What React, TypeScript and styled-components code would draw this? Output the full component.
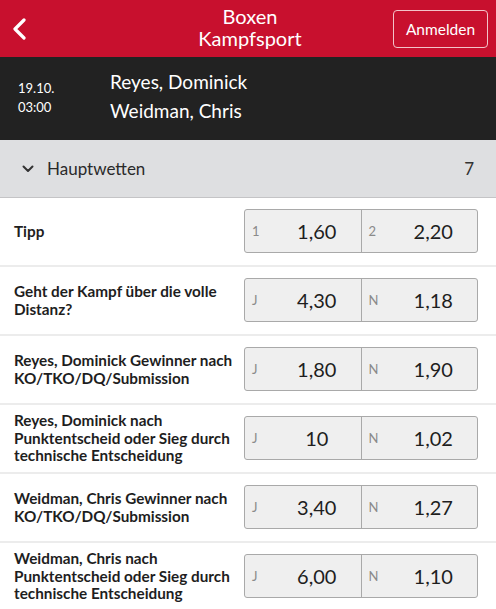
import React from 'react'
import styled, { createGlobalStyle } from 'styled-components'

const GlobalStyle = createGlobalStyle`
  html, body {
    margin: 0;
    padding: 0;
    background: #ffffff;
  }
  body {
    font-family: Lato, "Open Sans", sans-serif;
    color: #222222;
  }
`

type Market = {
  label: string
  left: [string, string]
  right: [string, string]
}

const markets: Market[] = [
  { label: 'Tipp', left: ['1', '1,60'], right: ['2', '2,20'] },
  { label: 'Geht der Kampf über die volle Distanz?', left: ['J', '4,30'], right: ['N', '1,18'] },
  { label: 'Reyes, Dominick Gewinner nach KO/TKO/DQ/Submission', left: ['J', '1,80'], right: ['N', '1,90'] },
  {
    label: 'Reyes, Dominick nach Punktentscheid oder Sieg durch technische Entscheidung',
    left: ['J', '10'],
    right: ['N', '1,02'],
  },
  { label: 'Weidman, Chris Gewinner nach KO/TKO/DQ/Submission', left: ['J', '3,40'], right: ['N', '1,27'] },
  {
    label: 'Weidman, Chris nach Punktentscheid oder Sieg durch technische Entscheidung',
    left: ['J', '6,00'],
    right: ['N', '1,10'],
  },
]

const App: React.FC = () => {
  return (
    <>
      <GlobalStyle />
      <Page>
        <TopBar>
          <BackButton aria-label="Zurück">
            <svg width="16" height="22" viewBox="0 0 16 22">
              <path d="M12 2 L3 11 L12 20" fill="none" stroke="#fff" strokeWidth="3.2" strokeLinecap="round" strokeLinejoin="round" />
            </svg>
          </BackButton>
          <Title>
            Boxen
            <br />
            Kampfsport
          </Title>
          <LoginButton>Anmelden</LoginButton>
        </TopBar>

        <EventBar>
          <EventTime>
            <span>19.10.</span>
            <span>03:00</span>
          </EventTime>
          <Teams>
            <span>Reyes, Dominick</span>
            <span>Weidman, Chris</span>
          </Teams>
        </EventBar>

        <GroupHeader>
          <GroupTitle>
            <svg width="12" height="8" viewBox="0 0 12 8">
              <path d="M1.5 1.5 L6 6 L10.5 1.5" fill="none" stroke="#333" strokeWidth="2" strokeLinecap="round" strokeLinejoin="round" />
            </svg>
            Hauptwetten
          </GroupTitle>
          <GroupCount>7</GroupCount>
        </GroupHeader>

        {markets.map((m) => (
          <MarketRow key={m.label}>
            <MarketLabel>{m.label}</MarketLabel>
            <OddsBox>
              <OddsCell>
                <OddsKey>{m.left[0]}</OddsKey>
                <OddsValue>{m.left[1]}</OddsValue>
              </OddsCell>
              <OddsCell divider>
                <OddsKey>{m.right[0]}</OddsKey>
                <OddsValue>{m.right[1]}</OddsValue>
              </OddsCell>
            </OddsBox>
          </MarketRow>
        ))}
      </Page>
    </>
  )
}

const Page = styled.div`
  width: 496px;
  height: 609px;
  overflow: hidden;
  background: #ffffff;
`

const TopBar = styled.header`
  height: 57px;
  background: #c8102e;
  display: grid;
  grid-template-columns: 1fr auto 1fr;
  align-items: center;
  padding: 0 8px 0 12px;
  box-sizing: border-box;
  color: #ffffff;
`

const BackButton = styled.div`
  justify-self: start;
  display: flex;
  align-items: center;
  height: 24px;
`

const Title = styled.h1`
  margin: 0 0 3px;
  font-size: 20px;
  font-weight: 400;
  line-height: 22px;
  text-align: center;
`

const LoginButton = styled.div`
  justify-self: end;
  box-sizing: border-box;
  width: 95px;
  height: 38px;
  display: flex;
  align-items: center;
  justify-content: center;
  border: 1.5px solid #f3c3c9;
  border-radius: 4px;
  font-size: 15.5px;
  color: #ffffff;
`

const EventBar = styled.section`
  height: 83px;
  background: #222222;
  color: #ffffff;
  display: flex;
  align-items: center;
  box-sizing: border-box;
  padding: 0 0 6px 18px;
`

const EventTime = styled.div`
  width: 92px;
  display: flex;
  flex-direction: column;
  gap: 3px;
  font-size: 13px;
  line-height: 16px;
  margin-top: 4px;
`

const Teams = styled.div`
  display: flex;
  flex-direction: column;
  gap: 6px;
  font-size: 19px;
  line-height: 23px;
`

const GroupHeader = styled.div`
  height: 58px;
  box-sizing: border-box;
  background: #dedfe1;
  border-bottom: 1px solid #c4c4c6;
  display: flex;
  align-items: center;
  justify-content: space-between;
  padding: 0 22px 0 22px;
`

const GroupTitle = styled.div`
  display: flex;
  align-items: center;
  gap: 13px;
  font-size: 17px;
  color: #2a2a2a;
`

const GroupCount = styled.span`
  font-size: 17px;
  color: #333333;
`

const MarketRow = styled.div`
  height: 69px;
  box-sizing: border-box;
  border-bottom: 2px solid #ececec;
  display: flex;
  align-items: center;
  justify-content: space-between;
  padding: 0 18px 0 14px;
`

const MarketLabel = styled.div`
  width: 224px;
  font-size: 15.3px;
  font-weight: 700;
  line-height: 17.5px;
  color: #1e1e1e;
`

const OddsBox = styled.div`
  width: 234px;
  height: 44px;
  box-sizing: border-box;
  border: 1px solid #a9a9a9;
  border-radius: 3px;
  background: #efefef;
  display: flex;
  margin-top: -1px;
`

const OddsCell = styled.div<{ divider?: boolean }>`
  flex: 1;
  display: flex;
  align-items: center;
  padding-left: 7px;
  border-left: ${(p) => (p.divider ? '1px solid #a9a9a9' : 'none')};
`

const OddsKey = styled.span`
  width: 21px;
  font-size: 13px;
  color: #8a8a8a;
`

const OddsValue = styled.span`
  flex: 1;
  text-align: center;
  font-size: 20px;
  color: #1e1e1e;
`

export default App
